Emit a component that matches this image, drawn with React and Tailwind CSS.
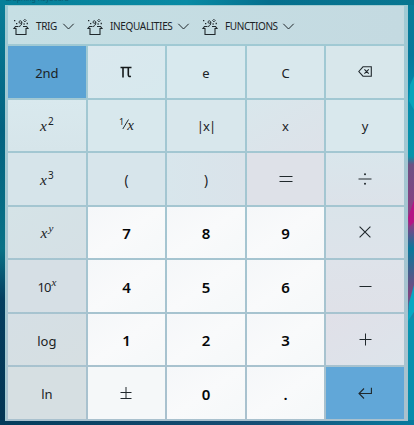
import React from "react";

const icon = "block overflow-visible";
const math = "font-['Liberation_Serif',serif] italic";

function Line({ d, w = 14, h = 14, sw = 1.1 }) {
  return (
    <svg className={icon} width={w} height={h} viewBox={`0 0 ${w} ${h}`} fill="none" stroke="#20282c" strokeWidth={sw}>
      <path d={d} />
    </svg>
  );
}

function Power({ base, exp, serifBase = true, serifExp = false }) {
  return (
    <span className="flex items-start pt-[2px] leading-none">
      <span className={serifBase ? `${math} text-[15.5px] leading-[16px]` : "text-[13px] leading-[16px] tracking-[-0.9px]"}>{base}</span>
      <span className={serifExp ? `${math} -mt-[3px] ml-px text-[11px] leading-[12px]` : "-mt-[3px] ml-px text-[10px] leading-[12px]"}>{exp}</span>
    </span>
  );
}

function Box() {
  return (
    <svg className={icon} width="16" height="16" viewBox="0 0 16 16" fill="none" stroke="#20282c">
      <path d="M5.5 7.5H2.5L1 9.5h2v6h10v-6h2l-1.5-2H10" strokeWidth="1.1" />
      <path d="M8.8 3.2c0 1.4-2.8 1.5-2.8 0 0-1.9 2.8-1.9 2.8.2 0 2.3-.9 3.5-2.9 4.2" />
      <path d="M11.9.3l1.3 1.3-1.3 1.3-1.3-1.3z" strokeWidth=".9" />
      <path d="M1 1.7h1.3M3 4.7h1.3M13.6 4.5h1.3M10.5 5h1.2" strokeWidth="1.3" />
    </svg>
  );
}

const keys = [
  ["2nd", <span className="text-[13px]">2nd</span>, "bg-[#5ba3d4]"],
  ["pi", <svg className="block" width="12" height="12" viewBox="0 0 12 12" fill="none" stroke="#15191b" strokeWidth="1.6"><path d="M.5 1.5h11M3 1.5v10M8.3 1.5v7.3c0 1.5.8 2 2.6 1.4" /></svg>, "bg-linear-to-br from-[#dae8ee] to-[#d7e9ee]"],
  ["e", <span className="text-[13px]">e</span>, "bg-[#d8e9ee]"],
  ["C", <span className="text-[13px]">C</span>, "bg-[#d9e8ed]"],
  ["back", <Line w={14} h={11} d="M.8 5.5L5 .8h8.3v9.4H5zM6.4 3.3l4.4 4.4M10.8 3.3L6.4 7.7" />, "bg-[#d8e7eb]"],

  ["sq", <Power base="x" exp="2" />, "bg-linear-to-b from-[#d9e9ee] to-[#d6e5ea]"],
  ["inv", <span className="flex items-start leading-none"><span className="-mt-[1px] text-[9px] leading-[10px]">1</span><svg className="-ml-[2px] block" width="7" height="12" viewBox="0 0 7 12" fill="none" stroke="#20282c"><path d="M.8 11L6.5 1.5" /></svg><span className={`${math} -ml-[2px] text-[15px] leading-[15px]`}>x</span></span>, "bg-[#d8e8ed]"],
  ["abs", <span className="text-[13px] tracking-[-0.9px]">|x|</span>, "bg-[#d8e7ec]"],
  ["x", <span className="text-[13px]">x</span>, "bg-linear-to-br from-[#d9e7ec] to-[#dde2e9]"],
  ["y", <span className="text-[13px]">y</span>, "bg-[#d9e8ed]"],

  ["cube", <Power base="x" exp="3" />, "bg-[#d6e4ea]"],
  ["(", <span className="text-[13.5px]">(</span>, "bg-[#d7e5eb]"],
  [")", <span className="text-[13.5px]">)</span>, "bg-linear-to-r from-[#d8e6ec] to-[#dae3ea]"],
  ["=", <Line w={14} h={8} sw={1} d="M.5 1.5h13M.5 6.5h13" />, "bg-[#dee1e8]"],
  ["div", <svg className="block" width="14" height="12" viewBox="0 0 14 12" fill="#20282c"><path d="M.5 5.5h13v1H.5z" /><circle cx="7" cy="1.2" r="1" /><circle cx="7" cy="10.8" r="1" /></svg>, "bg-linear-to-b from-[#d9e6ec] to-[#dce2e9]"],

  ["pow", <Power base="x" exp="y" serifExp />, "bg-linear-to-br from-[#d5e3e7] to-[#d5e0e5]"],
  ["7"], ["8"], ["9"],
  ["mul", <Line w={12} h={12} sw={1.1} d="M.6.6l10.8 10.8M11.4.6L.6 11.4" />, "bg-linear-to-b from-[#dae4ea] to-[#dde3ea]"],

  ["10x", <Power base="10" exp="x" serifBase={false} serifExp />, "bg-[#d6dfe5]"],
  ["4"], ["5"], ["6"],
  ["sub", <Line w={13} h={5} sw={1} d="M.5 2.5h12" />, "bg-linear-to-b from-[#dee3ea] to-[#dfe1e8]"],

  ["log", <span className="text-[13px]">log</span>, "bg-linear-to-br from-[#d5dfe5] to-[#d6dfe2]"],
  ["1"], ["2"], ["3"],
  ["add", <Line w={13} h={13} sw={1} d="M.5 6.5h12M6.5.5v12" />, "bg-linear-to-br from-[#e0e0e8] to-[#dde4eb]"],

  ["ln", <span className="text-[13px]">ln</span>, "bg-[#d6dfe2]"],
  ["pm", <Line w={12} h={14} sw={1} d="M.5 6.5h11M6 1v11M.5 12.5h11" />, "bg-[#f5f8f9]"],
  ["0"], ["."],
  ["enter", <Line w={14} h={12} d="M13.4.8v5.7H1M6 1.5l-5 5 5 5" />, "bg-[#61a7d8]"],
];

const nudge = {
  "2nd": "pt-[3px]", e: "pt-[3px]", C: "pt-[3px]",
  abs: "pt-[3px]", x: "pt-[3px]", y: "pt-[3px]", "(": "pt-[3px]", ")": "pt-[3px]",
  log: "pt-[3px]", ln: "pt-[2px]",
};

function Menu({ label, width, text }) {
  return (
    <div className={`flex items-center ${width}`}>
      <Box />
      <span className={`ml-[7px] text-[10px] ${text}`}>{label}</span>
      <Line w={11} h={7} sw={1} d="M.3.8l5.2 5.2L10.7.8" />
    </div>
  );
}

export default function App() {
  return (
    <div className="relative h-[425px] w-[414px] overflow-hidden bg-linear-to-b from-[#067f9a] via-[#05708c] to-[#033b5c] font-['Noto_Sans','Open_Sans',sans-serif] text-[#1b2225]">
      <svg className="absolute inset-0" width="414" height="425">
        <defs>
          <linearGradient id="left" x2="0" y2="1">
            <stop stopColor="#087d97" /><stop offset=".3" stopColor="#026280" />
            <stop offset=".58" stopColor="#087287" /><stop offset=".7" stopColor="#043e60" /><stop offset="1" stopColor="#033553" />
          </linearGradient>
          <linearGradient id="right" x2="0" y2="1">
            <stop stopColor="#087c98" /><stop offset=".12" stopColor="#06799b" /><stop offset=".22" stopColor="#058bac" />
            <stop offset=".36" stopColor="#0893aa" /><stop offset=".38" stopColor="#6c5283" /><stop offset=".52" stopColor="#923984" />
            <stop offset=".58" stopColor="#08799c" /><stop offset=".69" stopColor="#81447f" />
            <stop offset=".75" stopColor="#0794b0" /><stop offset="1" stopColor="#078cac" />
          </linearGradient>
          <linearGradient id="edge">
            <stop stopColor="#033c5b" /><stop offset=".65" stopColor="#164f76" /><stop offset="1" stopColor="#077b9f" />
          </linearGradient>
          <linearGradient id="top">
            <stop stopColor="#067f99" /><stop offset=".45" stopColor="#088aa4" /><stop offset=".65" stopColor="#056f8e" /><stop offset="1" stopColor="#087691" />
          </linearGradient>
        </defs>
        <rect width="414" height="6" fill="url(#top)" />
        <rect y="5" width="6" height="420" fill="url(#left)" />
        <rect x="406" y="5" width="8" height="420" fill="url(#right)" />
        <rect y="420" width="414" height="5" fill="url(#edge)" />
        <path d="M414 76l-4 9-1 16 5 9z" fill="#07a5bb" />
        <path d="M414 200l-6 18 2 8 4-4z" fill="#b41485" />
        <path d="M414 285l-5 18-1 18 6-9z" fill="#07a8c3" />
      </svg>
      <div className="absolute -top-[6px] left-[5px] text-[7px] leading-[10px] text-[#075b72]">Graphing Keyboard</div>
      <main className="relative mt-[5px] ml-[5px] flex h-[416px] w-[403px] flex-col border-t border-l border-[#a1cbd1] bg-linear-to-b from-[#9fcad4] to-[#a9c1ce] pr-[4px] pb-[2px] pl-[2px]">
        <div className="flex h-[38px] shrink-0 items-center bg-linear-to-r from-[#c6dfe4] to-[#c4dae1] pt-[3px] pl-[5px]">
          <Menu label="TRIG" width="w-[74px]" text="w-[27px] tracking-[-0.35px]" />
          <Menu label="INEQUALITIES" width="w-[115px]" text="w-[68px] tracking-[-0.34px]" />
          <Menu label="FUNCTIONS" width="w-[110px]" text="w-[58px] tracking-[-0.4px]" />
        </div>
        <div className="mt-[2px] grid flex-1 grid-cols-5 grid-rows-7 gap-[1.8px]">
          {keys.map(([id, content, bg]) => (
            <button
              key={id}
              className={`flex min-h-0 min-w-0 items-center justify-center leading-none ${bg || "bg-linear-to-br from-[#f5f7f9] via-[#f9fafb] to-[#f5f8f9]"} ${nudge[id] || ""}`}
            >
              {content || <span className="pt-[2px] text-[15px] font-semibold text-[#050708]">{id}</span>}
            </button>
          ))}
        </div>
      </main>
    </div>
  );
}
